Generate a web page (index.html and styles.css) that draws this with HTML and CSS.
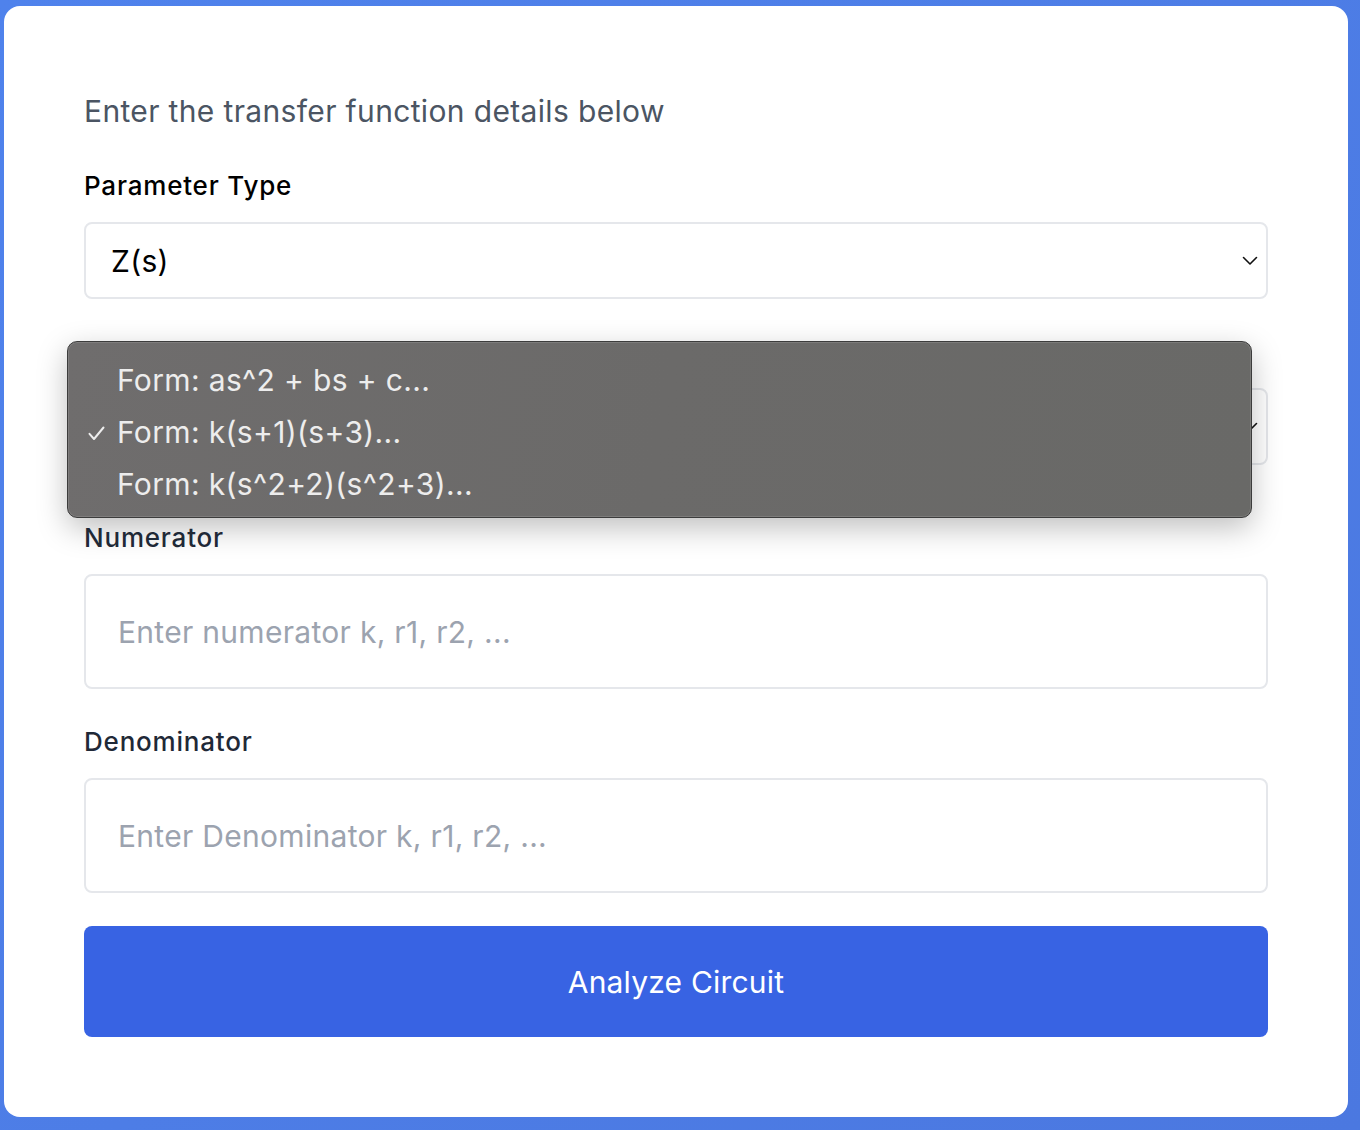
FILE: index.html
```html
<!DOCTYPE html>
<html>
<head>
<meta charset="utf-8">
<link rel="stylesheet" href="styles.css">
</head>
<body>
<div class="card">
  <p class="intro">Enter the transfer function details below</p>

  <div class="field">
    <label class="label">Parameter Type</label>
    <div class="select">
      <span class="select-value">Z(s)</span>
      <svg class="chev" width="16" height="10" viewBox="0 0 16 10"><path d="M1.5 1.5 L8 8 L14.5 1.5" fill="none" stroke="#111" stroke-width="1.6" stroke-linecap="round" stroke-linejoin="round"/></svg>
    </div>
  </div>

  <div class="field field-form">
    <label class="label covered">Input Form</label>
    <div class="select">
      <span class="select-value covered">Form: k(s+1)(s+3)...</span>
      <svg class="chev" width="16" height="10" viewBox="0 0 16 10"><path d="M1.5 1.5 L8 8 L14.5 1.5" fill="none" stroke="#111" stroke-width="1.6" stroke-linecap="round" stroke-linejoin="round"/></svg>
    </div>
    <div class="popup">
      <div class="opt"><span class="check"></span>Form: as^2 + bs + c...</div>
      <div class="opt"><span class="check"><svg width="17" height="15" viewBox="0 0 17 15"><path d="M1.5 7.8 L6 13 L15.5 1.5" fill="none" stroke="#ededed" stroke-width="2" stroke-linecap="round" stroke-linejoin="round"/></svg></span>Form: k(s+1)(s+3)...</div>
      <div class="opt"><span class="check"></span>Form: k(s^2+2)(s^2+3)...</div>
    </div>
  </div>

  <div class="field">
    <label class="label">Numerator</label>
    <div class="input">Enter numerator k, r1, r2, ...</div>
  </div>

  <div class="field field-last">
    <label class="label">Denominator</label>
    <div class="input">Enter Denominator k, r1, r2, ...</div>
  </div>

  <button class="btn">Analyze Circuit</button>
</div>
</body>
</html>
```
FILE: styles.css
```css
html, body {
  margin: 0;
  height: 100%;
}
body {
  background: linear-gradient(135deg, #4f82ec 0%, #4b78e0 100%);
  padding: 6px 12px 13px 4px;
  box-sizing: border-box;
  font-family: Inter, "Noto Sans", sans-serif;
}
.card {
  background: #fff;
  border-radius: 16px;
  padding: 80px 80px 80px 80px;
  height: 1111px;
  box-sizing: border-box;
  display: flex;
  flex-direction: column;
}
.intro {
  margin: 0;
  font-size: 30px;
  line-height: 50px;
  color: #4b5563;
  letter-spacing: 0.35px;
}
.field {
  position: relative;
  display: flex;
  flex-direction: column;
  margin-bottom: 37px;
}
.intro + .field {
  margin-top: 34px;
}
.field-form {
  margin-bottom: 57px;
}
.field-last {
  margin-bottom: 33px;
}
.label {
  font-size: 26px;
  line-height: 32px;
  font-weight: 500;
  color: #1f2937;
  margin-bottom: 20px;
  letter-spacing: 0.8px;
}
.field:first-of-type .label {
  color: #000;
}
.covered {
  visibility: hidden;
}
.select {
  height: 77px;
  box-sizing: border-box;
  border: 2px solid #e5e7eb;
  border-radius: 8px;
  display: flex;
  align-items: center;
  justify-content: space-between;
  padding: 0 8px 0 25px;
}
.select-value {
  font-size: 30px;
  color: #000;
  letter-spacing: 0.3px;
}
.chev {
  display: block;
}
.input {
  height: 115px;
  box-sizing: border-box;
  border: 2px solid #e5e7eb;
  border-radius: 8px;
  display: flex;
  align-items: center;
  padding: 0 32px;
  font-size: 30px;
  color: #9ca3af;
  letter-spacing: 0.3px;
}
.btn {
  height: 111px;
  border: none;
  border-radius: 8px;
  background: #3863e3;
  color: #fff;
  font-family: Inter, "Noto Sans", sans-serif;
  font-size: 30px;
  letter-spacing: 0.2px;
}
.popup {
  position: absolute;
  left: -17px;
  width: 1185px;
  top: 5px;
  height: 177px;
  box-sizing: border-box;
  background: linear-gradient(100deg, #6f6d6d 0%, #6b6a69 50%, #696967 100%);
  border: 1px solid #3c3c3c;
  border-radius: 10px;
  box-shadow: 0 10px 30px rgba(0, 0, 0, 0.25), inset 0 0 0 1px rgba(255,255,255,0.12);
  padding: 12px 0 0 0;
}
.opt {
  height: 52px;
  line-height: 52px;
  font-size: 30px;
  color: #ededed;
  display: flex;
  align-items: center;
  letter-spacing: 0.35px;
}
.check {
  width: 49px;
  padding-left: 20px;
  box-sizing: border-box;
  display: flex;
  align-items: center;
  padding-top: 3px;
}
.check svg {
  display: block;
}
```
